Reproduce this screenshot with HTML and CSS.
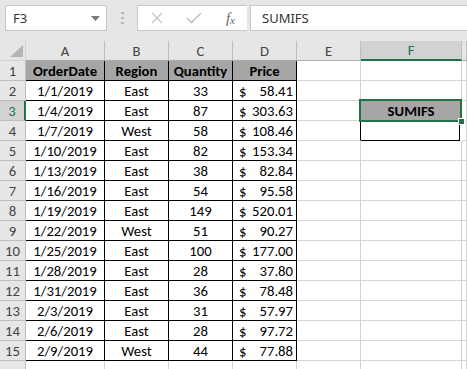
FILE: index.html
```html
<!DOCTYPE html>
<html lang="en">

<head>
    <meta charset="UTF-8" />
    <meta name="viewport" content="width=device-width, initial-scale=1.0" />
    <title>SUMIFS</title>
    <link rel="stylesheet" href="styles.css">
</head>

<body>
    <div class="toolbar">
        <div class="name-box">
            <span>F3</span>
            <svg class="caret" width="9" height="5" viewBox="0 0 9 5"><polygon points="0,0 9,0 4.5,5" fill="#7a7a7a" /></svg>
        </div>
        <div class="dots">
            <svg width="3" height="12" viewBox="0 0 3 12">
                <rect x="0" y="0" width="3" height="2" fill="#b8b8b8" />
                <rect x="0" y="5" width="3" height="2" fill="#b8b8b8" />
                <rect x="0" y="10" width="3" height="2" fill="#b8b8b8" />
            </svg>
        </div>
        <div class="fx-box">
            <svg width="12" height="12" viewBox="0 0 12 12"><path d="M1 1 L11 11 M11 1 L1 11" stroke="#c4c4c4" stroke-width="1.4" fill="none" /></svg>
            <svg width="16" height="12" viewBox="0 0 16 12"><path d="M1 6 L5.5 10.5 L15 1" stroke="#c4c4c4" stroke-width="1.6" fill="none" /></svg>
            <span class="fx">f<sub>x</sub></span>
        </div>
        <div class="formula">SUMIFS</div>
    </div>

    <div class="sheet">
        <div class="corner">
            <svg width="13" height="12" viewBox="0 0 13 12"><polygon points="13,0 13,12 0,12" fill="#b4b4b4" /></svg>
        </div>
        <div class="col-head">A</div>
        <div class="col-head">B</div>
        <div class="col-head">C</div>
        <div class="col-head">D</div>
        <div class="col-head">E</div>
        <div class="col-head active">F</div>
        <div class="col-head"></div>
    </div>

    <script>
        const rows = [
            ["1/1/2019", "East", 33, "58.41"],
            ["1/4/2019", "East", 87, "303.63"],
            ["1/7/2019", "West", 58, "108.46"],
            ["1/10/2019", "East", 82, "153.34"],
            ["1/13/2019", "East", 38, "82.84"],
            ["1/16/2019", "East", 54, "95.58"],
            ["1/19/2019", "East", 149, "520.01"],
            ["1/22/2019", "West", 51, "90.27"],
            ["1/25/2019", "East", 100, "177.00"],
            ["1/28/2019", "East", 28, "37.80"],
            ["1/31/2019", "East", 36, "78.48"],
            ["2/3/2019", "East", 31, "57.97"],
            ["2/6/2019", "East", 28, "97.72"],
            ["2/9/2019", "West", 44, "77.88"]
        ];

        const sheet = document.querySelector(".sheet");

        function cell(cls, html) {
            const div = document.createElement("div");
            div.className = cls;
            div.innerHTML = html;
            sheet.appendChild(div);
        }

        // header row of the table
        cell("row-head", "1");
        ["OrderDate", "Region", "Quantity", "Price"].forEach(t => cell("cell data head", t));
        cell("cell", "");
        cell("cell", "");
        cell("cell", "");

        rows.forEach((r, i) => {
            const n = i + 2;
            cell(n === 3 ? "row-head active" : "row-head", n);
            cell("cell data", r[0]);
            cell("cell data", r[1]);
            cell("cell data", r[2]);
            cell("cell data money", `<span>$</span><span>${r[3]}</span>`);
            cell(n === 4 ? "cell edge" : "cell", "");
            if (n === 3) cell("cell selected", "SUMIFS");
            else if (n === 4) cell("cell boxed", "");
            else cell("cell", "");
            cell("cell", "");
        });

        // partial row at the bottom, only its top edge shows
        cell("row-head", "");
        for (let i = 0; i < 7; i++) cell("cell", "");
    </script>
</body>

</html>
```

FILE: styles.css
```css
body {
    margin: 0;
    background: #e6e6e6;
    font-family: "Carlito", "Lato", "Liberation Sans", sans-serif;
    overflow: hidden;
}

.toolbar {
    display: flex;
    height: 41px;
    padding: 5px 0 0 5px;
    box-sizing: border-box;
    font-family: "Noto Sans", "Liberation Sans", sans-serif;
    font-size: 13px;
    color: #333;
}

.name-box,
.fx-box,
.formula {
    height: 26px;
    background: white;
    border: 1px solid #c6c6c6;
    box-sizing: border-box;
    display: flex;
    align-items: center;
}

.name-box {
    width: 102px;
    padding: 0 6px 0 7px;
    justify-content: space-between;
}

.caret {
    margin-top: 1px;
}

.dots {
    width: 30px;
    display: flex;
    justify-content: center;
    align-items: center;
    height: 26px;
}

.fx-box {
    width: 110px;
    padding: 0 12px 0 13px;
    justify-content: space-between;
    border-right: none;
}

.fx {
    font-family: "Liberation Serif", serif;
    font-style: italic;
    font-size: 15px;
    color: #666;
}

.fx sub {
    font-size: 11px;
    vertical-align: -1px;
}

.formula {
    flex: 1;
    margin-left: 3px;
    padding-left: 11px;
    border-right: none;
}

.sheet {
    display: grid;
    grid-template-columns: 26px 79px 64px 64px 64px 64px 101px 1fr;
    grid-template-rows: 20px;
    grid-auto-rows: 20px;
    background: white;
    font-size: 14.7px;
}

.sheet > div {
    box-sizing: border-box;
    border-right: 1px solid #d4d4d4;
    border-bottom: 1px solid #d4d4d4;
    display: flex;
    align-items: center;
    justify-content: center;
    white-space: nowrap;
}

.corner {
    background: #e6e6e6;
    justify-content: flex-end !important;
    align-items: flex-end !important;
    padding: 0 2px 3px 0;
}

.col-head {
    background: #e6e6e6;
    color: #444;
    border-right-color: #bdbdbd !important;
    border-bottom-color: #ababab !important;
}

.col-head.active {
    background: #d2d2d2;
    color: #217346;
    border-bottom: 2px solid #217346 !important;
}

.row-head {
    background: #e6e6e6;
    color: #444;
    border-right-color: #bdbdbd !important;
    border-bottom-color: #bdbdbd !important;
}

.row-head.active {
    background: #d2d2d2;
    color: #217346;
    border-right: 2px solid #217346 !important;
}

.data {
    color: #000;
    border-right-color: #000 !important;
    border-bottom-color: #000 !important;
}

.head {
    background: #a6a6a6;
    font-weight: bold;
}

.money {
    justify-content: space-between !important;
    padding: 0 3px 0 6px;
}

.edge {
    border-right-color: #000 !important;
}

.boxed {
    border-right-color: #000 !important;
    border-bottom-color: #000 !important;
    margin-right: 2px;
}

.selected {
    position: relative;
    background: #a6a6a6;
    font-weight: bold;
}

.selected::after {
    content: "";
    position: absolute;
    top: -2px;
    left: -2px;
    right: -1px;
    bottom: -2px;
    border: 2px solid #217346;
}

.selected::before {
    content: "";
    position: absolute;
    right: -4px;
    bottom: -5px;
    width: 5px;
    height: 5px;
    background: #217346;
    border: 1px solid white;
    z-index: 1;
}
```
